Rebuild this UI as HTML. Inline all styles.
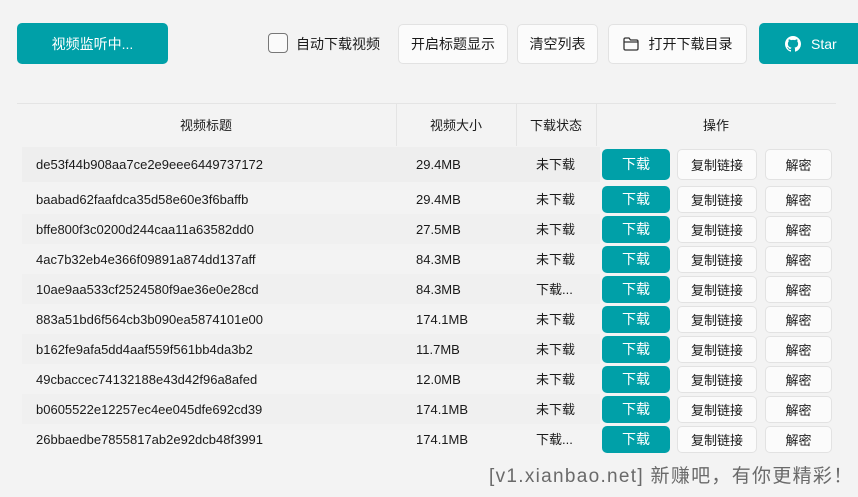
<!DOCTYPE html><html><head><meta charset="utf-8"><style>
body{margin:0;width:858px;height:497px;background:#f3f3f3;font-family:"Liberation Sans","Noto Sans CJK SC",sans-serif;position:relative;overflow:hidden;color:#1a1a1a}
.b{position:absolute;box-sizing:border-box;border-radius:5px;display:flex;align-items:center;justify-content:center;font-size:14px}
.t{background:#00a0a8;color:#fff}
.w{background:#fbfbfb;border:1px solid #e2e2e2;color:#1a1a1a}
.row{position:absolute;left:22px;width:578px;height:30px}
.c{position:absolute;font-size:13px;height:20px;line-height:20px;white-space:nowrap}
.line{position:absolute;background:#e4e4e4}
.foot{position:absolute;left:489px;top:461px;font-size:19px;letter-spacing:1.3px;color:#6a6a6a;white-space:nowrap}
</style></head><body>
<div class="b t" style="left:17px;top:23px;width:151px;height:41px">视频监听中...</div>
<div style="position:absolute;left:268px;top:33px;width:18px;height:18px;border:1px solid #777;border-radius:4px;background:#fafafa"></div>
<div class="c" style="left:296px;top:34px;font-size:14px">自动下载视频</div>
<div class="b w" style="left:398px;top:24px;width:110px;height:40px">开启标题显示</div>
<div class="b w" style="left:517px;top:24px;width:81px;height:40px">清空列表</div>
<div class="b w" style="left:608px;top:24px;width:139px;height:40px"><svg width="16" height="14" viewBox="0 0 16 14" style="margin-right:10px"><path d="M1 2.5Q1 1 2.5 1H6L7.5 3H13.5Q15 3 15 4.5V11.5Q15 13 13.5 13H2.5Q1 13 1 11.5Z M1 5H15" fill="none" stroke="#333" stroke-width="1.3"/></svg>打开下载目录</div>
<div class="b t" style="left:759px;top:23px;width:110px;height:41px;justify-content:flex-start;padding-left:26px"><svg width="16" height="16" viewBox="0 0 16 16" style="margin-right:10px"><path fill="#fff" d="M8 0C3.58 0 0 3.580 0 8c0 3.54 2.29 6.53 5.47 7.59.4.07.55-.17.55-.38v-1.33c-2.230.48-2.7-1.07-2.7-1.07-.36-.93-.89-1.17-.89-1.17-.73-.5.05-.49.05-.49.8.06 1.23.82 1.23.82.71 1.23 1.87.87 2.33.66.07-.52.28-.87.5-1.07-1.78-.2-3.64-.89-3.64-3.95 0-.87.31-1.59.82-2.15-.08-.2-.36-1.02.08-2.12 0 0 .67-.21 2.2.82a7.6 7.6 0 014 0c1.53-1.04 2.2-.82 2.2-.82.44 1.1.16 1.92.08 2.12.51.56.82 1.27.82 2.15 0 3.07-1.87 3.75-3.65 3.95.29.25.54.73.54 1.48v2.2c0 .21.15.46.55.38A8 8 0 0016 8c0-4.42-3.58-8-8-8z"/></svg>Star</div>
<div class="line" style="left:17px;top:103px;width:819px;height:1px"></div>
<div class="line" style="left:396px;top:104px;width:1px;height:42px"></div>
<div class="line" style="left:516px;top:104px;width:1px;height:42px"></div>
<div class="line" style="left:596px;top:104px;width:1px;height:42px"></div>
<div class="c" style="left:180px;top:116px">视频标题</div>
<div class="c" style="left:430px;top:116px">视频大小</div>
<div class="c" style="left:530px;top:116px">下载状态</div>
<div class="c" style="left:703px;top:116px">操作</div>
<div class="row" style="top:147px;height:35px;background:#eeeeee"></div>
<div class="row" style="top:214px;background:#f0f0f0"></div>
<div class="row" style="top:274px;background:#f0f0f0"></div>
<div class="row" style="top:334px;background:#f0f0f0"></div>
<div class="row" style="top:394px;background:#f0f0f0"></div>
<div id="rows"></div>
<script>
var d=[["de53f44b908aa7ce2e9eee6449737172","29.4MB","未下载"],["baabad62faafdca35d58e60e3f6baffb","29.4MB","未下载"],["bffe800f3c0200d244caa11a63582dd0","27.5MB","未下载"],["4ac7b32eb4e366f09891a874dd137aff","84.3MB","未下载"],["10ae9aa533cf2524580f9ae36e0e28cd","84.3MB","下载..."],["883a51bd6f564cb3b090ea5874101e00","174.1MB","未下载"],["b162fe9afa5dd4aaf559f561bb4da3b2","11.7MB","未下载"],["49cbaccec74132188e43d42f96a8afed","12.0MB","未下载"],["b0605522e12257ec4ee045dfe692cd39","174.1MB","未下载"],["26bbaedbe7855817ab2e92dcb48f3991","174.1MB","下载..."]];
var h="";d.forEach(function(r,i){var cy=i==0?164:169+30*i;var bh=i==0?31:27;var bt=cy-bh/2;
h+='<div class="c" style="left:36px;top:'+(cy-9)+'px">'+r[0]+'</div><div class="c" style="left:416px;top:'+(cy-9)+'px">'+r[1]+'</div><div class="c" style="left:536px;top:'+(cy-9)+'px">'+r[2]+'</div>';
h+='<div class="b t" style="left:602px;top:'+bt+'px;width:68px;height:'+bh+'px">下载</div><div class="b w" style="left:677px;top:'+bt+'px;width:80px;height:'+bh+'px;font-size:13px">复制链接</div><div class="b w" style="left:765px;top:'+bt+'px;width:67px;height:'+bh+'px;font-size:13px">解密</div>';});
document.getElementById("rows").innerHTML=h;
</script>
<div class="foot">[v1.xianbao.net] 新赚吧，有你更精彩！</div>
</body></html>
